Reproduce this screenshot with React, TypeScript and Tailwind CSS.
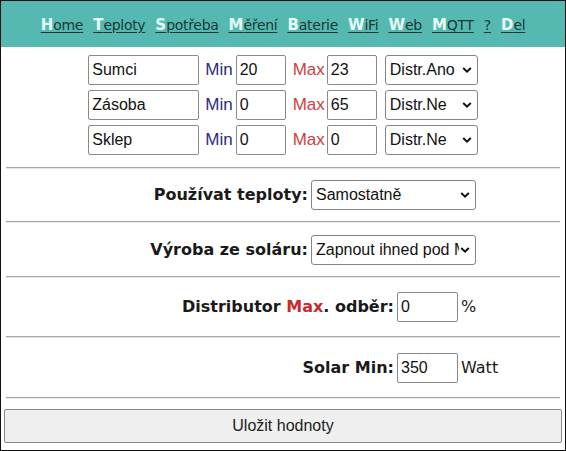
import React from "react";

const NAV = [
  { first: "H", rest: "ome" },
  { first: "T", rest: "eploty" },
  { first: "S", rest: "potřeba" },
  { first: "M", rest: "ěření" },
  { first: "B", rest: "aterie" },
  { first: "W", rest: "iFi" },
  { first: "W", rest: "eb" },
  { first: "M", rest: "QTT" },
  { first: "", rest: "?" },
  { first: "D", rest: "el" },
];

const SENSORS = [
  { name: "Sumci", min: "20", max: "23", distr: "Distr.Ano" },
  { name: "Zásoba", min: "0", max: "65", distr: "Distr.Ne" },
  { name: "Sklep", min: "0", max: "0", distr: "Distr.Ne" },
];

function Chevron() {
  return (
    <svg
      width="10"
      height="7"
      viewBox="0 0 10 7"
      className="pointer-events-none absolute right-[6px] top-1/2 -translate-y-1/2"
    >
      <path d="M1.2 1.5 L5 5.2 L8.8 1.5" fill="none" stroke="#111" strokeWidth="2" />
    </svg>
  );
}

function Select({ value, width }: { value: string; width: string }) {
  return (
    <div className={`relative h-[30px] ${width}`}>
      <select
        defaultValue={value}
        className="h-full w-full appearance-none overflow-hidden whitespace-nowrap rounded-[3px] border border-[#858585] bg-white pl-[4px] pr-[16px] font-['Liberation_Sans',Arial,sans-serif] text-[16px] text-[#111]"
      >
        <option>{value}</option>
      </select>
      <Chevron />
    </div>
  );
}

function Input({ value, width }: { value: string; width: string }) {
  return (
    <input
      defaultValue={value}
      className={`h-[30px] ${width} rounded-[2px] border border-[#8a8a8a] bg-white px-[3px] font-['Liberation_Sans',Arial,sans-serif] text-[16px] text-[#111]`}
    />
  );
}

function Hr() {
  return <div className="mx-[5px] h-[2px] border-b border-t border-[#a8a8a8] border-b-[#e6e6e6]" />;
}

export default function App() {
  return (
    <div className="box-border flex h-[451px] w-[566px] flex-col border border-[#111] bg-white font-['Liberation_Sans',Arial,sans-serif]">
      {/* Header */}
      <nav className="flex h-[46px] items-center justify-center gap-[10px] bg-[#56b9b1] pt-[2px] font-['DejaVu_Sans',Verdana,sans-serif] text-[14px]">
        {NAV.map((item, i) => (
          <a key={i} href="#" className="text-[#173a37] underline underline-offset-2">
            {item.first && <span className="text-[15px] font-bold text-[#e4fbf6]">{item.first}</span>}
            <span className="tracking-[-0.3px]">{item.rest}</span>
          </a>
        ))}
      </nav>

      {/* Sensors */}
      <div className="flex flex-col items-center gap-[5px] pb-[12px] pt-[8px]">
        {SENSORS.map((s) => (
          <div key={s.name} className="flex items-center">
            <Input value={s.name} width="w-[111px]" />
            <span className="ml-[6px] mr-[3px] text-[17px] text-[#2b2b86]">Min</span>
            <Input value={s.min} width="w-[50px]" />
            <span className="ml-[7px] mr-[2px] text-[17px] text-[#d04040]">Max</span>
            <Input value={s.max} width="w-[50px]" />
            <div className="ml-[8px]">
              <Select value={s.distr} width="w-[93px]" />
            </div>
          </div>
        ))}
      </div>

      <Hr />

      <div className="flex flex-col font-['DejaVu_Sans',Verdana,sans-serif] text-[16px] text-[#1a1a1a]">
        <div className="flex h-[52px] items-center">
          <div className="w-[310px] pr-[3px] text-right font-bold">Používat teploty:</div>
          <Select value="Samostatně" width="w-[165px]" />
        </div>
        <Hr />
        <div className="flex h-[53px] items-center">
          <div className="w-[310px] pr-[3px] text-right font-bold">Výroba ze soláru:</div>
          <Select value="Zapnout ihned pod Max" width="w-[165px]" />
        </div>
        <Hr />
        <div className="flex h-[58px] items-center">
          <div className="w-[396px] pr-[3px] text-right font-bold">
            Distributor <span className="text-[#cc2a2a]">Max</span>. odběr:
          </div>
          <Input value="0" width="w-[61px]" />
          <span className="ml-[3px]">%</span>
        </div>
        <Hr />
        <div className="flex h-[59px] items-center">
          <div className="w-[396px] pr-[3px] text-right font-bold">Solar Min:</div>
          <Input value="350" width="w-[61px]" />
          <span className="ml-[3px]">Watt</span>
        </div>
        <Hr />
      </div>

      <div className="px-[3px] pt-[10px]">
        <button className="h-[34px] w-full rounded-[2px] border border-[#8a8a8a] bg-[#efefef] text-[16px] text-[#222]">
          Uložit hodnoty
        </button>
      </div>
    </div>
  );
}
